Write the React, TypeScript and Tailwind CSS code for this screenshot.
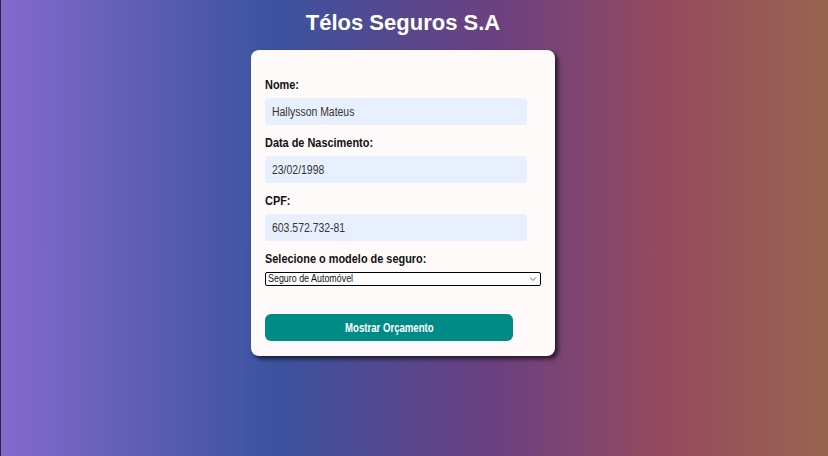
import React from "react";

interface Field {
  label: string,
  value: string,
}

const App: React.FC = () => {
  const fields: Field[] = [
    { label: "Nome:", value: "Hallysson Mateus" },
    { label: "Data de Nascimento:", value: "23/02/1998" },
    { label: "CPF:", value: "603.572.732-81" },
  ];

  return (
    <div
      className="h-screen w-full border-l border-[#2b2438] bg-[linear-gradient(to_right,#8469cc_0%,#3b53a0_33%,#6c4080_60%,#944a5e_80%,#99644f_100%)] font-['Liberation_Sans',Arial,sans-serif]"
    >
      <div className="flex flex-col items-center pt-[10px] pr-[23px]">
        <h1 className="text-[22px] leading-[26px] font-bold text-white">Télos Seguros S.A</h1>

        {/* Card */}
        <div className="mt-[14px] w-[304px] rounded-lg bg-[#fefaf9] px-[14px] pt-[27px] pb-[15px] shadow-[3px_3px_4px_rgba(0,0,0,0.65)]">
          {fields.map((field, index) => (
            <div key={index} className="mb-[10px]">
              <label className="block text-[13px] leading-[15px] font-bold text-[#111] mb-[6px] whitespace-nowrap">
                <span className="inline-block origin-left scale-x-[0.84]">{field.label}</span>
              </label>
              <div className="w-[262px] h-[27px] rounded-[3px] bg-[#e8f0fe] flex items-center pl-[7px] text-[12px] text-[#333] whitespace-nowrap">
                <span className="inline-block origin-left scale-x-[0.87]">{field.value}</span>
              </div>
            </div>
          ))}

          <label className="block text-[13px] leading-[15px] font-bold text-[#111] mb-[6px] whitespace-nowrap">
            <span className="inline-block origin-left scale-x-[0.84]">Selecione o modelo de seguro:</span>
          </label>
          <div className="w-[276px] h-[14px] rounded-[2px] border border-black bg-white flex items-center justify-between pl-[2px] pr-[3px] text-[10px] leading-[12px] text-[#111] whitespace-nowrap">
            <span className="inline-block origin-left scale-x-[0.89]">Seguro de Automóvel</span>
            <svg width="8" height="6" viewBox="0 0 8 6" fill="none">
              <path d="M1 1.5 L4 4.5 L7 1.5" stroke="#666" strokeWidth="1" />
            </svg>
          </div>

          <button className="mt-[28px] w-[248px] h-[27px] rounded-md bg-[#008b87] text-white text-[12px] font-bold whitespace-nowrap">
            <span className="inline-block origin-center scale-x-[0.8]">Mostrar Orçamento</span>
          </button>
        </div>
      </div>
    </div>
  );
};

export default App;
